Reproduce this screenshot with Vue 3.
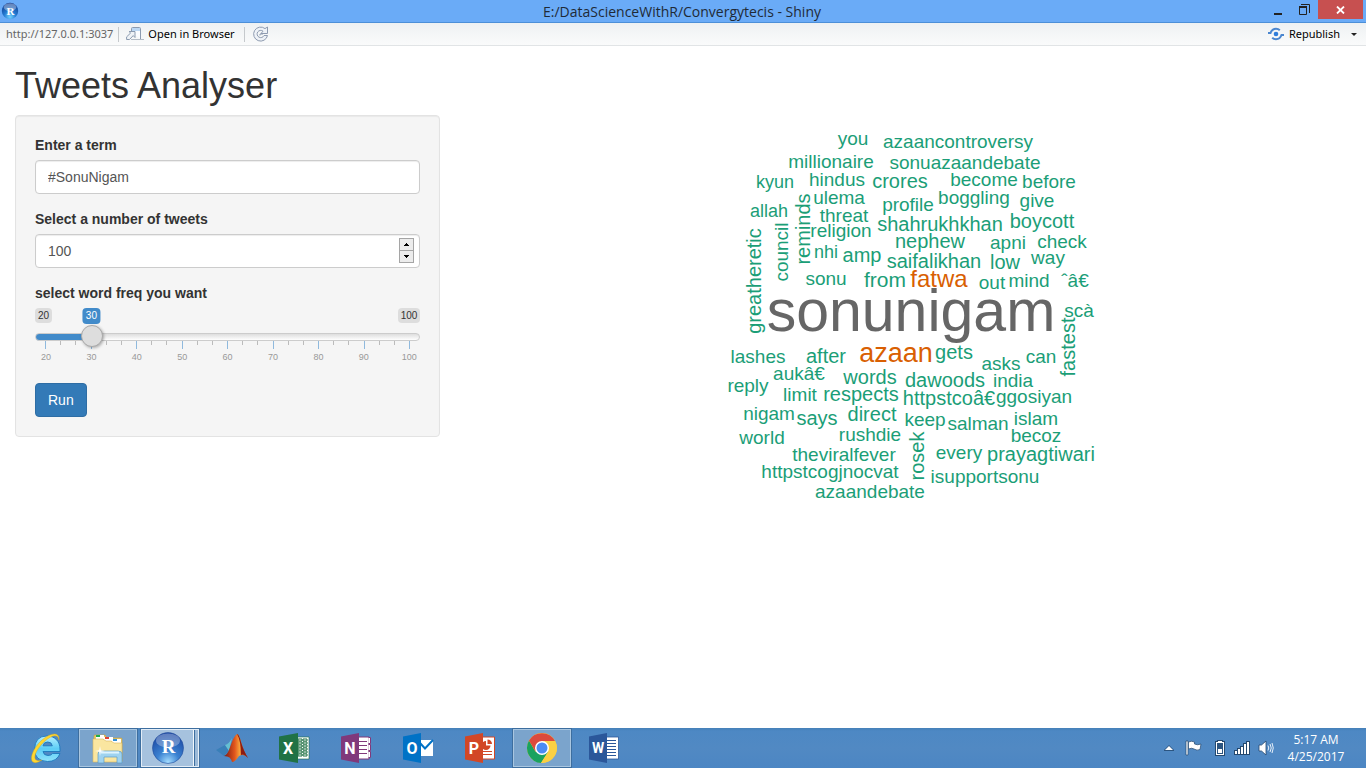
<script setup>
import { computed, ref } from 'vue'

const term = ref('#SonuNigam')
const tweets = ref(100)
const freq = ref(30)
const ratio = computed(() => (freq.value - 20) / 80)
const majors = [20, 30, 40, 50, 60, 70, 80, 90, 100]
const ticks = Array.from({ length: 25 }, (_, i) => i)

// text, centre x, baseline y, font size
const words = [
  ['you', 853, 145, 19], ['azaancontroversy', 958, 148, 19], ['millionaire', 831, 168, 19],
  ['sonuazaandebate', 965, 169, 19], ['kyun', 775, 188, 18], ['hindus', 837, 186, 19],
  ['crores', 900, 188, 20], ['become', 984, 186, 19], ['before', 1049, 188, 19],
  ['ulema', 839, 204, 19], ['profile', 908, 211, 19], ['boggling', 974, 204, 19],
  ['give', 1037, 207, 19], ['allah', 769, 217, 18], ['threat', 844, 222, 19],
  ['shahrukhkhan', 940, 231, 20], ['boycott', 1042, 228, 20], ['religion', 841, 237, 19],
  ['nephew', 930, 248, 20], ['apni', 1008, 249, 19], ['check', 1062, 248, 19],
  ['nhi', 826, 258, 18], ['amp', 862, 262, 20], ['saifalikhan', 934, 268, 20],
  ['low', 1005, 269, 20], ['way', 1048, 264, 19], ['sonu', 826, 285, 19],
  ['from', 885, 287, 21], ['out', 992, 289, 19], ['mind', 1029, 287, 19],
  ['ˆâ€', 1075, 287, 19], ['scà', 1079, 317, 19], ['lashes', 758, 363, 19],
  ['after', 826, 363, 20], ['gets', 954, 359, 20], ['asks', 1001, 370, 19],
  ['can', 1041, 363, 19], ['aukâ€', 799, 380, 19], ['words', 870, 384, 20],
  ['dawoods', 945, 387, 20], ['india', 1013, 387, 19], ['reply', 748, 392, 19],
  ['limit', 800, 401, 19], ['respects', 861, 401, 20], ['httpstcoâ€', 949, 405, 20],
  ['ggosiyan', 1034, 403, 19], ['nigam', 769, 420, 19], ['says', 817, 425, 20],
  ['direct', 872, 421, 20], ['keep', 925, 426, 19], ['salman', 978, 430, 19],
  ['islam', 1036, 425, 19], ['world', 762, 444, 19], ['rushdie', 870, 441, 19],
  ['becoz', 1036, 442, 19], ['theviralfever', 844, 461, 19], ['every', 959, 459, 19],
  ['prayagtiwari', 1041, 461, 20], ['httpstcogjnocvat', 830, 478, 19],
  ['isupportsonu', 985, 483, 19], ['azaandebate', 870, 498, 19],
  ['fatwa', 939, 287, 24, 'mid'], ['azaan', 896, 362, 27, 'mid'], ['sonunigam', 911, 331, 59, 'top'],
]
// text, baseline x, centre y, font size
const upright = [
  ['greatheretic', 761, 281, 20], ['council', 788, 252, 19], ['reminds', 810, 229, 20],
  ['fastest', 1075, 347, 20], ['rosek', 924, 456, 20],
]
</script>

<template>
  <div class="window">
    <header class="titlebar">
      <svg class="app-icon" width="18" height="18" viewBox="0 0 18 18" aria-hidden="true">
        <defs>
          <radialGradient id="ball" cx="50%" cy="85%" r="85%">
            <stop offset="0" stop-color="#6fd0ff" /><stop offset=".45" stop-color="#2277cf" /><stop offset="1" stop-color="#123a8c" />
          </radialGradient>
        </defs>
        <circle cx="9" cy="9" r="8.2" fill="url(#ball)" />
        <ellipse cx="9" cy="5.2" rx="6.2" ry="4" fill="#fff" opacity=".35" />
        <text x="9.5" y="13" text-anchor="middle" class="serif-mark" font-size="11">R</text>
      </svg>
      <h1 class="caption">E:/DataScienceWithR/Convergytecis - Shiny</h1>
      <div class="win-buttons">
        <button type="button" class="win-btn" aria-label="Minimize">
          <svg width="10" height="10" viewBox="0 0 10 10"><path d="M1 8h8v2H1z" fill="#222" /></svg>
        </button>
        <button type="button" class="win-btn" aria-label="Restore">
          <svg width="11" height="11" viewBox="0 0 11 11" fill="none" stroke="#222"><path d="M2 .5h8.500V9" /><path d="M.5 3h7v7.500h-7z" /><path d="M0 3h8" stroke-width="2" /></svg>
        </button>
        <button type="button" class="win-btn close" aria-label="Close">
          <svg width="9" height="8" viewBox="0 0 9 8" stroke="#fff" stroke-width="1.8"><path d="M1 .5l7 7M8 .5l-7 7" /></svg>
        </button>
      </div>
    </header>

    <nav class="toolbar">
      <span class="url">http://127.0.0.1:3037</span>
      <i class="sep"></i>
      <button type="button" class="tool open">
        <svg width="18" height="14" viewBox="0 0 18 14" fill="none" stroke="#8b9bb0">
          <path d="M5.5 5V1.500q0-1 1-1h7q1 0 1 1v10.500" fill="#fafcff" />
          <path d="M6 1h8v3H6z" fill="#bcd8f4" stroke="none" />
          <path d="M5 12.500h13" stroke="#b4bcc6" />
          <path d="M3 4.500h6v6L7.200 8.600 3.500 12.500H.6v-2.600L4.600 6z" fill="#eef2f6" />
        </svg>
        Open in Browser
      </button>
      <i class="sep"></i>
      <button type="button" class="tool reload" aria-label="Reload">
        <svg width="16" height="16" viewBox="0 0 16 16" fill="none" stroke-linejoin="round">
          <path d="M14.500 9.500A7 7 0 1 1 12 2.600L14.500 1v6.500H8L10 5.200A3.600 3.600 0 1 0 11 9.500z" fill="#eef2f7" stroke="#8e9bb0" />
          <path d="M7 9.500V8h3" stroke="#8e9bb0" />
        </svg>
      </button>
      <button type="button" class="tool republish">
        <svg width="16" height="14" viewBox="0 0 16 14" fill="none" stroke="#4a86cf" stroke-width="2">
          <path d="M0 6h2.500Q4 1.800 8 1.800q2.300 0 3.800 1.500" /><path d="M16 8h-2.500Q12 12.200 8 12.200q-2.300 0-3.800-1.500" />
          <circle cx="8" cy="7" r="2.300" fill="#2f7ddb" stroke="none" />
        </svg>
        Republish
        <svg class="caret" width="6" height="3" viewBox="0 0 6 3"><path d="M0 0h6L3 3z" fill="#222" /></svg>
      </button>
    </nav>

    <main class="page">
      <h2>Tweets Analyser</h2>
      <div class="row">
        <div class="side">
          <form class="well" @submit.prevent>
            <div class="group">
              <label for="term">Enter a term</label>
              <input id="term" v-model="term" type="text" class="control" />
            </div>
            <div class="group">
              <label for="count">Select a number of tweets</label>
              <div class="number">
                <input id="count" v-model.number="tweets" type="number" class="control" />
                <div class="spin">
                  <button type="button" aria-label="Increase" @click="tweets++"><svg width="5" height="3" viewBox="0 0 5 3"><path d="M2 0h1v1h1v1h1v1H0V2h1V1h1z" /></svg></button>
                  <button type="button" aria-label="Decrease" @click="tweets--"><svg width="5" height="3" viewBox="0 0 5 3"><path d="M0 0h5v1H4v1H3v1H2V2H1V1H0z" /></svg></button>
                </div>
              </div>
            </div>
            <div class="group">
              <label for="freq">select word freq you want</label>
              <div class="slider" :style="{ '--ratio': ratio }">
                <div class="badges">
                  <span>20</span>
                  <span>100</span>
                  <output for="freq" class="now">{{ freq }}</output>
                </div>
                <input id="freq" v-model.number="freq" type="range" min="20" max="100" />
                <div class="ticks"><i v-for="t in ticks" :key="t" :class="{ major: t % 3 === 0 }"></i></div>
                <div class="scale"><span v-for="m in majors" :key="m">{{ m }}</span></div>
              </div>
            </div>
            <button type="submit" class="run">Run</button>
          </form>
        </div>
        <div class="plot">
          <svg class="cloud" width="400" height="400" viewBox="711 115 400 400" role="img" aria-label="Word cloud">
            <text v-for="w in words" :key="w[0]" :x="w[1]" :y="w[2]" :font-size="w[3]" :class="w[4]">{{ w[0] }}</text>
            <text v-for="w in upright" :key="w[0]" :font-size="w[3]" :transform="`translate(${w[1]} ${w[2]}) rotate(-90)`">{{ w[0] }}</text>
          </svg>
        </div>
      </div>
    </main>

    <footer class="taskbar">
      <div class="apps">
        <button type="button" class="app" aria-label="Internet Explorer">
          <svg width="32" height="32" viewBox="0 0 32 32">
            <defs><linearGradient id="ie" x2="0" y2="1"><stop offset="0" stop-color="#b5f0ff" /><stop offset=".5" stop-color="#5ccdf6" /><stop offset="1" stop-color="#8fe2fb" /></linearGradient></defs>
            <path d="M17 4C25 4 30 9.500 30 17v2.500H13q.7 4 5 4 3.300 0 4.500-2H30Q27 29.500 17.500 29.500 4.500 29 4.500 17 5 4 17 4zM13 13.800h9.300q-.5-3.800-4.600-3.800T13 13.800z" fill="url(#ie)" stroke="#1d78bd" stroke-width=".9" fill-rule="evenodd" />
            <path d="M29 8C30-1 20 1 12 8 3 16-1 27 3 30q3 2 9-2-5 1.500-6.500-.5C3 24 8 15 15 9c7-6 13-7.500 14-1z" fill="#ffd731" stroke="#d9a514" stroke-width=".4" />
          </svg>
        </button>
        <button type="button" class="app active" aria-label="File Explorer">
          <svg width="34" height="32" viewBox="0 0 34 32">
            <path d="M3 4q0-1 1-1h10l2 3h14q1 0 1 1v22H3z" fill="#e9c967" stroke="#c8a03e" stroke-width=".6" />
            <path d="M5 3h8v4H5z" fill="#fff" /><path d="M5 3h4v2H5z" fill="#1dac4b" />
            <path d="M13 5h9v4h-9z" fill="#fff" /><path d="M14 5h4v2h-4z" fill="#df4333" />
            <path d="M21 7h9v4h-9z" fill="#fff" /><path d="M22 7h4v2h-4z" fill="#3191d8" />
            <path d="M2 7h10l3 2h5l3 2h8v19H2z" fill="#fae6a0" stroke="#d9b75b" stroke-width=".6" />
            <path d="M7 31v-9q0-3 3-3h17q4 0 4 3v9h-5v-6H13v6z" fill="#9fd3f0" stroke="#5b9cc6" stroke-width=".7" />
            <path d="M10 20.500h18" stroke="#dff4ff" stroke-width="2" />
            <path d="M9 14l.8 4.200L14 19l-4.200.8L9 24l-.8-4.200L4 19l4.200-.8z" fill="#fff" />
          </svg>
        </button>
        <button type="button" class="app active current" aria-label="RStudio">
          <svg width="34" height="34" viewBox="0 0 34 34">
            <defs><radialGradient id="rs" cx="50%" cy="95%" r="90%"><stop offset="0" stop-color="#a3dcff" /><stop offset=".4" stop-color="#3b82d1" /><stop offset="1" stop-color="#1c49a4" /></radialGradient></defs>
            <circle cx="17" cy="17" r="15.500" fill="url(#rs)" stroke="#254f9c" stroke-width=".6" />
            <ellipse cx="17" cy="9.500" rx="12" ry="7" fill="#fff" opacity=".3" />
            <text x="17.500" y="22" text-anchor="middle" class="serif-mark" font-size="19">R</text>
          </svg>
        </button>
        <button type="button" class="app" aria-label="MATLAB">
          <svg width="32" height="30" viewBox="0 0 32 30">
            <defs><linearGradient id="ml"><stop offset="0" stop-color="#7a1712" /><stop offset=".45" stop-color="#e2571d" /><stop offset=".65" stop-color="#f7a03a" /><stop offset="1" stop-color="#97200f" /></linearGradient></defs>
            <path d="M0 17l9-5 5 5-6 6z" fill="#397fb8" /><path d="M9 12q4-1 7-7l-3 13z" fill="#65c0d2" />
            <path d="M8 23q3-1 5-6 5-15 8-16 2 0 4 8 3 10 7 16-4-5-9-2-4 6-7 6-1-6-8-6z" fill="url(#ml)" />
            <path d="M21 1q2 0 4 8 3 10 7 16-4-5-7-3Q25 8 21 1z" fill="#8d1c12" />
          </svg>
        </button>
        <button type="button" class="app" aria-label="Excel">
          <svg width="32" height="32" viewBox="0 0 32 32">
            <path d="M18 5h13v22H18z" fill="#fff" stroke="#1c7044" stroke-width=".6" />
            <path d="M20 7h4v2h-4zM20 10h4v2h-4zM20 13h4v2h-4zM20 16h4v2h-4zM20 19h4v2h-4zM20 22h4v2h-4zM25 7h4v2h-4zM25 10h4v2h-4zM25 13h4v2h-4zM25 16h4v2h-4zM25 19h4v2h-4zM25 22h4v2h-4z" fill="#fff" stroke="#207245" />
            <path d="M1 4.500L20 1v30L1 27.500z" fill="#207245" /><text x="10" y="22" class="mark">X</text>
          </svg>
        </button>
        <button type="button" class="app" aria-label="OneNote">
          <svg width="32" height="32" viewBox="0 0 32 32">
            <path d="M18 5h11v22H18z" fill="#fff" stroke="#80397b" stroke-width="1" />
            <path d="M28.500 5.500h2v6h-2M28.500 12.500h2v6h-2M28.500 19.500h2v6h-2" fill="#fff" stroke="#80397b" />
            <path d="M19 9.500h8M19 13.500h8M19 17.500h8M19 21.500h8" stroke="#80397b" />
            <path d="M1 4.500L19 1v30L1 27.500z" fill="#80397b" /><text x="10" y="22" class="mark">N</text>
          </svg>
        </button>
        <button type="button" class="app" aria-label="Outlook">
          <svg width="32" height="32" viewBox="0 0 32 32">
            <path d="M17 8h14v16H17z" fill="#fff" /><path d="M18 11l5 5.500L31 8" fill="none" stroke="#0072c6" stroke-width="2" />
            <path d="M1 4.500L19 1v30L1 27.500z" fill="#0072c6" /><text x="10" y="22" class="mark">O</text>
          </svg>
        </button>
        <button type="button" class="app" aria-label="PowerPoint">
          <svg width="32" height="32" viewBox="0 0 32 32">
            <path d="M18 5h12.500v22H18z" fill="#fff" stroke="#d24726" />
            <path d="M19 19.500h9M19 22.500h9" stroke="#d24726" />
            <path d="M22 9a4.500 4.500 0 1 0 4.500 4.500H22z" fill="#d24726" /><path d="M23.500 7.500A4.500 4.500 0 0 1 28 12h-4.500z" fill="#d24726" />
            <path d="M1 4.500L19 1v30L1 27.500z" fill="#d24726" /><text x="10" y="22" class="mark">P</text>
          </svg>
        </button>
        <button type="button" class="app active" aria-label="Chrome">
          <svg width="32" height="32" viewBox="0 0 32 32">
            <circle cx="16" cy="16" r="15" fill="#fbd043" />
            <path d="M3 8.500A15 15 0 0 0 15 31l7.500-11.500L16 16l-6.500 3.700z" fill="#1aa260" />
            <path d="M16 9h13A15 15 0 0 1 15 31l7.500-12z" fill="#fbd043" />
            <path d="M3 8.500l6.500 11L16 9h13a15 15 0 0 0-26-.5z" fill="#dc4a3d" />
            <circle cx="16" cy="16" r="7" fill="#fff" /><circle cx="16" cy="16" r="5.500" fill="#4a8bf4" />
          </svg>
        </button>
        <button type="button" class="app" aria-label="Word">
          <svg width="32" height="32" viewBox="0 0 32 32">
            <path d="M18 5h12.500v22H18z" fill="#fff" stroke="#2b579a" stroke-width=".8" />
            <path d="M19 8.500h9M19 11.500h9M19 14.500h9M19 17.500h9M19 20.500h9M19 23.500h9" stroke="#2b579a" />
            <path d="M1 4.500L19 1v30L1 27.500z" fill="#2b579a" /><text x="10" y="21" class="mark wide">W</text>
          </svg>
        </button>
      </div>
      <div class="tray">
        <svg width="10" height="6" viewBox="0 0 10 6"><path d="M0 6v-1L5 0l5 5v1z" fill="#2c5580" /><path d="M1 5l4-4 4 4z" fill="#fff" /></svg>
        <svg class="flag" width="17" height="16" viewBox="0 0 17 16"><path d="M1 1h2v14H1z" fill="#fff" stroke="#24486e" stroke-width=".7" /><path d="M3.500 2q3-1.500 6 0v2q3 1.500 6.500 0l-1 5.500q-3 1.500-6-.5-2-1.500-5.500 0z" fill="#fff" stroke="#24486e" stroke-width=".7" /></svg>
        <svg class="battery" width="10" height="16" viewBox="0 0 10 16"><path d="M2 0h6v1h2v15H0V1h2z" fill="#24486e" /><path d="M3 1h4v1h2v13H1V2h2z" fill="#fff" /><path d="M2 3h6v11H2z" fill="#2c5580" /><path d="M3 9h4v4H3z" fill="#fff" /></svg>
        <svg class="signal" width="16" height="14" viewBox="0 0 16 14"><path d="M0 9h3V7h3V5h3V2h3V0h4v14H0z" fill="#24486e" /><path d="M1 10h2v3H1zM4 8h2v5H4zM7 6h2v7H7zM10 3h2v10h-2zM13 1h2v12h-2z" fill="#fff" /></svg>
        <svg class="sound" width="16" height="16" viewBox="0 0 16 16"><path d="M1 5h2.500L8 1v14l-4.500-4H1z" fill="#fff" stroke="#24486e" stroke-width=".8" /><path d="M10 5.500q1.500 2.500 0 5M12 4q2.500 4 0 8M14 3q2.500 5 0 10" fill="none" stroke="#e8f1fa" /></svg>
        <time class="clock"><span>5:17 AM</span><span>4/25/2017</span></time>
      </div>
    </footer>
  </div>
</template>

<style>
body { margin: 0; background: #fff; }
</style>

<style scoped>
.window {
  min-height: 100vh; display: flex; flex-direction: column; box-sizing: border-box;
  font-family: "Liberation Sans", Arial, sans-serif; font-size: 14px; line-height: 20px; color: #333;
}
.window * { box-sizing: border-box; }
button { font: inherit; margin: 0; padding: 0; border: 0; background: none; color: inherit; }
svg { display: block; }
.serif-mark { font-family: "Liberation Serif", serif; font-weight: bold; fill: #fff; }
.titlebar {
  display: grid; grid-template-columns: 1fr auto 1fr; align-items: start; height: 23px;
  background: #6aabf7; border-bottom: 1px solid #4c8fd8; padding: 0 3px 0 1px;
}
.app-icon { margin-top: 2px; }
.caption { margin: 0; font: 14px/23px "Open Sans", "Noto Sans", sans-serif; color: #1f2a36; }
.win-buttons { display: flex; justify-content: flex-end; }
.win-btn { display: flex; align-items: center; justify-content: center; width: 27px; height: 19px; }
.close { width: 45px; background: #c75050; }
.toolbar {
  display: flex; align-items: center; height: 23px; padding: 0 9px 0 6px;
  background: linear-gradient(#eef1f3, #fafbfb); border-bottom: 1px solid #e1e4e6;
  font: 11px/22px "Noto Sans", "Open Sans", sans-serif; color: #000;
}
.url { color: #666; }
.sep { width: 1px; height: 15px; background: #c5c9cc; margin-left: 5px; }
.tool { display: flex; align-items: center; height: 22px; }
.open { gap: 4px; margin: 0 4px 0 7px; }
.reload { margin-left: 8px; }
.republish { margin-left: auto; gap: 5px; }
.caret { margin-left: 6px; }

.page { flex: 1; padding: 20px 15px 0; }
h2 { margin: 0 0 10px; font-size: 36px; line-height: 39px; font-weight: 400; }
.row { display: flex; margin: 0 -15px; }
.side { flex: 0 0 33.3333%; padding: 0 15px; }
.plot { flex: 1; display: flex; justify-content: center; }
.well {
  border: 1px solid #e3e3e3; border-radius: 4px; padding: 19px; background: #f5f5f5;
  box-shadow: inset 0 1px 1px rgba(0, 0, 0, .05);
}
.group { margin-bottom: 15px; }
label { display: block; font-weight: 700; margin-bottom: 5px; }
.control {
  display: block; width: 100%; height: 34px; padding: 6px 12px; border: 1px solid #ccc; border-radius: 4px;
  background: #fff; color: #555; font: inherit; box-shadow: inset 0 1px 1px rgba(0, 0, 0, .075); outline: none;
  appearance: textfield;
}
.number { position: relative; }
.spin { position: absolute; right: 6px; top: 4px; width: 15px; height: 25px; display: flex; flex-direction: column; border: 1px solid #a5a5a5; }
.spin button { flex: 1; display: flex; align-items: center; justify-content: center; background: #ececec; }
.spin button + button { border-top: 1px solid #a5a5a5; }

.slider { height: 60px; font-size: 10px; line-height: 15px; }
.badges { position: relative; display: flex; justify-content: space-between; height: 17px; }
.badges span, .now { height: 15px; padding: 0 3px; border-radius: 4px; background: #ddd; color: #333; }
.now {
  position: absolute; left: calc(11px + (100% - 22px) * var(--ratio)); transform: translateX(-50%);
  height: 16px; line-height: 16px; background: #428bca; color: #fff;
}
input[type="range"] { position: relative; z-index: 1; display: block; width: 100%; height: 24px; margin: 0; appearance: none; background: none; outline: none; }
input[type="range"]::-webkit-slider-runnable-track {
  height: 8px; border-radius: 8px; border: 1px solid #ccc;
  background:
    linear-gradient(#428bca, #428bca) border-box 0 0 / calc(11px + (100% - 22px) * var(--ratio)) 100% no-repeat,
    linear-gradient(#dedede, #fff);
}
input[type="range"]::-webkit-slider-thumb {
  appearance: none; width: 22px; height: 22px; margin-top: -9px; border-radius: 50%;
  border: 1px solid #aaa; background: #ddd; box-shadow: 1px 1px 3px rgba(0, 0, 0, .3);
}
.ticks { display: flex; justify-content: space-between; margin: -8px 10px 0; height: 8px; }
.ticks i { width: 1px; height: 4px; background: #bbb; }
.ticks .major { height: 8px; background: #8fb9dd; }
.scale { display: flex; justify-content: space-between; margin: 1px 1px 0; font-size: 9px; color: #999; }
.scale span { width: 20px; text-align: center; }
.run { height: 34px; padding: 0 12px; border: 1px solid #2e6da4; border-radius: 4px; background: #337ab7; color: #fff; }

.cloud { font-family: "Liberation Sans", Arial, sans-serif; fill: #1b9e77; }
.cloud text { text-anchor: middle; }
.cloud .mid { fill: #d95f02; }
.cloud .top { fill: #666; }

.taskbar {
  display: flex; justify-content: space-between; height: 40px; padding: 0 16px;
  background: linear-gradient(#4680b8, #4d88c4 3px, #5189c3 50%, #4c86c3);
}
.apps { display: flex; gap: 2px; }
.app { display: flex; align-items: center; justify-content: center; width: 60px; height: 40px; }
.active { border: 1px solid #3d6e9f; background: #7ba4cc; box-shadow: inset 0 0 0 1px #a9c6e0; }
.current { background: linear-gradient(to right, #a6c2de 52px, #f2f7fb 52px 53px, #3d6e9f 53px 54px, #9cbad8 54px); box-shadow: inset 0 0 0 1px #e3edf7; padding-right: 5px; }
.mark { font: bold 16px Roboto, sans-serif; fill: #fff; text-anchor: middle; }
.wide { font-size: 14px; }
.tray { display: flex; align-items: center; color: #fff; }
.flag { margin-left: 11px; }
.battery { margin-left: 13px; }
.signal { margin-left: 9px; }
.sound { margin-left: 8px; }
.clock { display: flex; flex-direction: column; width: 68px; margin-left: 8px; text-align: center; font: 12px/17px "Open Sans", "Noto Sans", sans-serif; }
</style>
